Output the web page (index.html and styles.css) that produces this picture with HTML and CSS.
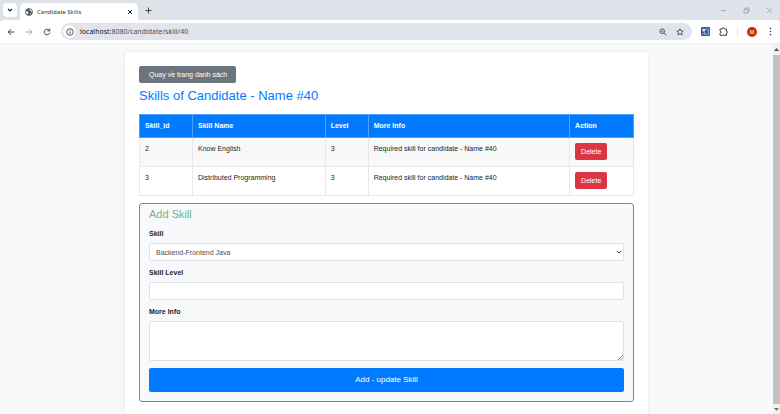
FILE: index.html
```html
<!DOCTYPE html>
<html lang="vi">
<head>
<meta charset="utf-8">
<title>Candidate Skills</title>
<link rel="stylesheet" href="styles.css">
</head>
<body>
<header class="browser">
  <div class="tabstrip">
    <button class="tab-search" aria-label="Search tabs"><svg width="6" height="6" viewBox="0 0 6 6"><path d="M1 2l2 2 2-2" fill="none" stroke="#222" stroke-width="1.1"/></svg></button>
    <div class="tab">
      <svg width="8" height="8" viewBox="0 0 16 16"><circle cx="8" cy="8" r="7.5" fill="#4b535c"/><path d="M2 6c2 1 5 0 5 3s-2 2-2 4C3 12 1 9 2 6zM9 2c-1 2 1 3 2 3s0 3 3 3c1-3-2-6-5-6zM10 10l3 0-2 3z" fill="#e8edf3"/></svg>
      <span class="tab-title">Candidate Skills</span>
      <button class="plain" aria-label="Close tab"><svg width="6" height="6" viewBox="0 0 6 6"><path d="M1 1l4 4M5 1L1 5" stroke="#222" stroke-width="1"/></svg></button>
    </div>
    <button class="plain" aria-label="New tab"><svg width="7" height="7" viewBox="0 0 7 7"><path d="M3.5 .5v6M.5 3.5h6" stroke="#444" stroke-width="1"/></svg></button>
    <div class="window-controls">
      <button class="plain" aria-label="Minimize"><svg width="7" height="7" viewBox="0 0 7 7"><path d="M1 3.5h5" stroke="#999da4" stroke-width=".8"/></svg></button>
      <button class="plain" aria-label="Restore"><svg width="7" height="7" viewBox="0 0 7 7"><path d="M1 2.2h3.8V6H1zM2.2 2.2V1H6v3.8H4.8" fill="none" stroke="#999da4" stroke-width=".8"/></svg></button>
      <button class="plain" aria-label="Close"><svg width="7" height="7" viewBox="0 0 7 7"><path d="M1 1l5 5M6 1L1 6" stroke="#999da4" stroke-width=".8"/></svg></button>
    </div>
  </div>
  <nav class="toolbar">
    <div class="nav-buttons">
      <button class="plain" aria-label="Back"><svg width="8" height="8" viewBox="0 0 8 8"><path d="M7.3 4H1.2M4 1.2L1.2 4 4 6.8" fill="none" stroke="#3c4043"/></svg></button>
      <button class="plain" aria-label="Forward"><svg width="8" height="8" viewBox="0 0 8 8"><path d="M.7 4h6.1M4 1.2L6.8 4 4 6.8" fill="none" stroke="#a9adb2"/></svg></button>
      <button class="plain" aria-label="Reload"><svg width="8" height="8" viewBox="0 0 8 8"><path d="M6.4 2.5A2.8 2.8 0 1 0 6.8 4.6M6.8.6v2.3H4.5" fill="none" stroke="#3c4043"/></svg></button>
    </div>
    <div class="omnibox">
      <span class="site-info"><svg width="8" height="8" viewBox="0 0 8 8"><circle cx="4" cy="4" r="3.3" fill="none" stroke="#444" stroke-width=".9"/><path d="M4 3.5v2.3M4 2v.9" stroke="#444" stroke-width=".9"/></svg></span>
      <span class="url"><span class="host">localhost</span>:8080/candidate/skill/40</span>
      <button class="plain" aria-label="Zoom"><svg width="8" height="8" viewBox="0 0 8 8"><circle cx="3.2" cy="3.2" r="2.3" fill="none" stroke="#444" stroke-width=".9"/><path d="M5 5l2.5 2.5M2.1 3.2h2.2" stroke="#444" stroke-width=".9"/></svg></button>
      <button class="plain" aria-label="Bookmark"><svg width="8" height="8" viewBox="0 0 16 16"><path d="M8 1.8l1.9 4.1 4.5.5-3.3 3 .9 4.4L8 11.6l-4 2.2.9-4.4-3.3-3 4.5-.5z" fill="none" stroke="#444" stroke-width="1.7"/></svg></button>
    </div>
    <div class="extensions">
      <svg width="9" height="9" viewBox="0 0 9 9"><rect width="9" height="9" rx="1" fill="#3558a4"/><path d="M1.5 1.8h2.6v2.6H1.5z" fill="#dbe6fa"/><path d="M4.6 2.2h2.8v5H3.6V5.2" fill="none" stroke="#b9cbee" stroke-width=".8"/><path d="M1.3 7.6l2-2" stroke="#b9cbee" stroke-width=".8"/></svg>
      <svg width="9" height="9" viewBox="0 0 9 9"><path d="M1 2h2.2c0-1.7 2.2-1.7 2.2 0h2v2.1c1.5 0 1.5 1.9 0 1.9v2.3H1V6.2c1.5 0 1.5-2.1 0-2.1z" fill="none" stroke="#3c4043" stroke-width="1"/></svg>
      <span class="divider"></span>
      <span class="avatar">M</span>
      <svg width="3" height="9" viewBox="0 0 3 9" fill="#444"><circle cx="1.5" cy="1.4" r=".8"/><circle cx="1.5" cy="4.5" r=".8"/><circle cx="1.5" cy="7.6" r=".8"/></svg>
    </div>
  </nav>
</header>
<div class="viewport">
  <main class="page">
    <div class="card">
      <a class="back" href="#">Quay về trang danh sách</a>
      <h1>Skills of Candidate - Name #40</h1>
      <table>
        <colgroup><col class="col-id"><col class="col-name"><col class="col-level"><col class="col-info"><col class="col-action"></colgroup>
        <thead><tr><th>Skill_id</th><th>Skill Name</th><th>Level</th><th>More Info</th><th>Action</th></tr></thead>
        <tbody>
          <tr><td>2</td><td>Know English</td><td>3</td><td>Required skill for candidate - Name #40</td><td><button class="delete">Delete</button></td></tr>
          <tr><td>3</td><td>Distributed Programming</td><td>3</td><td>Required skill for candidate - Name #40</td><td><button class="delete">Delete</button></td></tr>
        </tbody>
      </table>
      <form class="add-form">
        <h2>Add Skill</h2>
        <label for="skill">Skill</label>
        <div class="select-wrap">
          <select id="skill" class="field"><option>Backend-Frontend Java</option></select>
          <svg class="caret" width="6" height="4" viewBox="0 0 6 4"><path d="M.8.8L3 3 5.2.8" fill="none" stroke="#444"/></svg>
        </div>
        <label for="level">Skill Level</label>
        <input id="level" class="field" type="text">
        <label for="info">More Info</label>
        <div class="area-wrap">
          <textarea id="info" class="field"></textarea>
          <svg class="grip" width="5" height="5" viewBox="0 0 5 5"><path d="M0 5L5 0M2.5 5L5 2.5" stroke="#777" stroke-width=".9"/></svg>
        </div>
        <button class="submit" type="button">Add - update Skill</button>
      </form>
    </div>
  </main>
  <div class="scrollbar">
    <svg width="5" height="3" viewBox="0 0 5 3"><path d="M0 3L2.5 0 5 3z" fill="#505050"/></svg>
    <span class="thumb"></span>
    <svg width="5" height="3" viewBox="0 0 5 3"><path d="M0 0h5L2.5 3z" fill="#777"/></svg>
  </div>
</div>
</body>
</html>
```
FILE: styles.css
```css
* { box-sizing: border-box; }
body {
  margin: 0;
  height: 100vh;
  display: flex;
  flex-direction: column;
  overflow: hidden;
  font-family: "Liberation Sans", Arial, sans-serif;
  font-size: 7px;
  line-height: 12px;
  color: #212529;
}
button, input, select, textarea { font-family: inherit; margin: 0; }
svg { display: block; flex: none; }
.plain { border: 0; padding: 0; background: none; }

/* Browser frame */
.browser { font-family: "Noto Sans", sans-serif; background: #dee2e9; flex: none; }
.tabstrip { display: flex; align-items: center; height: 20px; padding-left: 3px; }
.tab-search {
  display: grid;
  place-items: center;
  width: 14px;
  height: 14px;
  padding: 0;
  border: 0;
  border-radius: 4px;
  background: #fff;
}
.tab {
  display: flex;
  align-items: center;
  align-self: flex-end;
  gap: 4px;
  width: 118px;
  height: 17px;
  margin: 0 7px 0 3px;
  padding: 0 5px;
  border-radius: 5px 5px 0 0;
  background: #fff;
}
.tab-title { flex: 1; font-size: 6px; color: #333; }
.window-controls { display: flex; gap: 16px; margin-left: auto; padding-right: 7px; }
.toolbar {
  display: flex;
  align-items: center;
  height: 24px;
  padding: 0 8px 0 7px;
  border-radius: 4px 4px 0 0;
  border-bottom: 1px solid #eceef1;
  background: #fff;
}
.nav-buttons { display: flex; gap: 10px; margin-right: 10px; }
.omnibox {
  display: flex;
  align-items: center;
  gap: 9px;
  flex: 1;
  height: 17px;
  padding: 0 8px 0 2px;
  border-radius: 9px;
  background: #e0e4ec;
}
.site-info {
  display: grid;
  place-items: center;
  width: 13px;
  height: 13px;
  border-radius: 50%;
  background: #fff;
}
.url { flex: 1; margin-left: -5px; font-size: 7px; color: #4b4f55; }
.host { color: #111; }
.extensions { display: flex; align-items: center; gap: 9px; padding-left: 9px; }
.divider { width: 1px; height: 8px; background: #d5e2fa; }
.avatar {
  width: 10px;
  height: 10px;
  margin-right: 3px;
  border-radius: 50%;
  background: #c23000;
  color: #fff;
  font-size: 5px;
  line-height: 10px;
  text-align: center;
}

/* Page */
.viewport { display: flex; flex: 1; min-height: 0; background: #f8f9fb; }
.page { flex: 1; overflow: hidden; padding-top: 8px; }
.card {
  width: 68%;
  max-width: 523px;
  min-height: 100%;
  margin: 0 auto;
  padding: 14px;
  border-radius: 4px;
  background: #fff;
  box-shadow: 0 0 5px rgba(0, 0, 0, .08);
}
.back {
  display: block;
  width: fit-content;
  padding: 0 9px 0 10px;
  border-radius: 2px;
  background: #6c757d;
  color: #fff;
  font-size: 7px;
  line-height: 17px;
  text-decoration: none;
}
h1 { margin: 4px 0 10px; font-size: 13px; font-weight: 400; line-height: 17px; color: #007bff; }
h2 { margin: 0 0 7px; font-size: 11px; font-weight: 400; line-height: 14px; color: #72b485; }

table { width: 100%; table-layout: fixed; border-collapse: collapse; margin-bottom: 7px; }
.col-id { width: 53px; }
.col-name { width: 27%; }
.col-level { width: 43px; }
.col-info { width: 41%; }
.col-action { width: 13%; }
th, td { padding: 5px; border: 1px solid #e6e9ec; text-align: left; vertical-align: top; }
td { padding-bottom: 6px; }
th { background: #007bff; color: #fff; border-color: #4da2ff; }
tbody tr:first-child { background: #f8f8f8; }
.delete {
  display: block;
  padding: 0 6px;
  border: 0;
  border-radius: 2px;
  background: #dc3545;
  color: #fff;
  font-size: 7px;
  line-height: 17px;
}

.add-form {
  padding: 3px 9px 9px;
  border: 1px solid #3795ff;
  border-radius: 3px;
  background: #f8f9fb;
}
label { display: block; margin-bottom: 3px; font-weight: 700; }
.field {
  display: block;
  width: 100%;
  height: 18px;
  margin-bottom: 6px;
  padding: 0 6px;
  border: 1px solid #dfe3e7;
  border-radius: 2px;
  background: #fff;
  color: #495057;
  font-size: 7px;
  appearance: none;
}
textarea.field { height: 40px; margin-bottom: 7px; resize: none; }
.select-wrap, .area-wrap { position: relative; }
.caret { position: absolute; right: 2px; top: 7px; }
.grip { position: absolute; right: 1px; bottom: 1px; }
.submit {
  display: block;
  width: 100%;
  padding: 0;
  border: 0;
  border-radius: 2px;
  background: #007bff;
  color: #fff;
  font-size: 8px;
  line-height: 24px;
}

.scrollbar {
  display: flex;
  flex-direction: column;
  align-items: center;
  gap: 4px;
  width: 7px;
  padding: 4px 0 3px;
  background: #f1f1f1;
}
.thumb { flex: 1; width: 100%; background: #c1c1c1; }
```
